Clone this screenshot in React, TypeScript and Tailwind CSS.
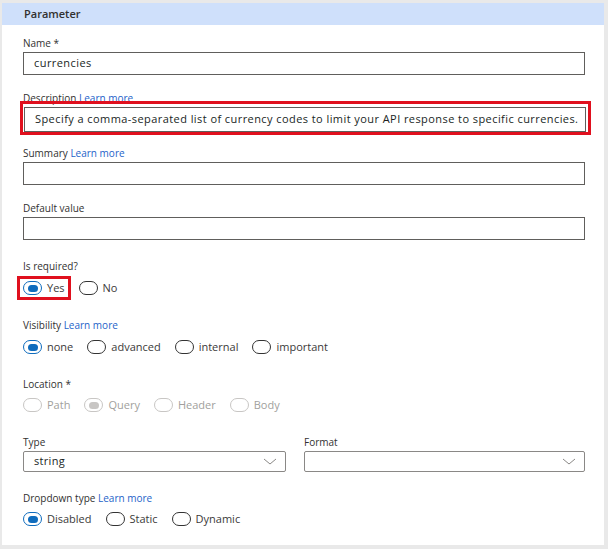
import type { ReactNode } from 'react';

function Label({ children, className = '' }: { children: ReactNode; className?: string }) {
  return <div className={`h-[14px] leading-[14px] text-[10px] text-[#323130] ${className}`}>{children}</div>;
}

function LearnMore() {
  return <span className="text-[#2563c9]"> Learn more</span>;
}

function Radio({
  label,
  checked = false,
  disabled = false,
}: {
  label: string;
  checked?: boolean;
  disabled?: boolean;
}) {
  const ring = disabled ? 'border-[#c8c6c4]' : checked ? 'border-[#0f6cbd]' : 'border-[#333333]';
  const dot = disabled ? 'bg-[#c8c6c4]' : 'bg-[#0f6cbd]';
  return (
    <div className="flex items-center gap-[5px]">
      <span className={`w-[19px] h-[14px] rounded-full border ${ring} flex items-center justify-center bg-white`}>
        {checked && <span className={`w-[10px] h-[7px] rounded-full ${dot}`} />}
      </span>
      <span className={`text-[11px] ${disabled ? 'text-[#a19f9d]' : 'text-[#3b3a39]'}`}>{label}</span>
    </div>
  );
}

function TextBox({ value = '', className = '' }: { value?: string; className?: string }) {
  return (
    <div
      className={`h-[23px] border border-[#605e5c] bg-white flex items-center px-[10px] text-[11px] tracking-[0.43px] text-[#201f1e] whitespace-nowrap overflow-hidden ${className}`}
    >
      {value}
    </div>
  );
}

function Select({ value = '' }: { value?: string }) {
  return (
    <div className="h-[21px] border border-[#8a8886] rounded-[2px] bg-white flex items-center justify-between pl-[10px] pr-[8px] text-[11px] tracking-[0.3px] text-[#201f1e]">
      <span>{value}</span>
      <svg width="14" height="7" viewBox="0 0 14 7" fill="none">
        <path d="M1 1l6 5 6-5" stroke="#8a8886" strokeWidth="1" />
      </svg>
    </div>
  );
}

export default function App() {
  return (
    <div
      className="w-[608px] h-[549px] bg-[#e9e9e9] pt-[3px] pl-[2px] pr-[4px] pb-[4px]"
      style={{ fontFamily: '"Open Sans", "Noto Sans", sans-serif' }}
    >
      <div className="h-full bg-white flex flex-col">
        {/* Header */}
        <div className="h-[22px] bg-[#cfe0fb] pl-[22px] flex items-center text-[11px] font-semibold text-[#323130]">
          Parameter
        </div>

        <div className="pl-[21px] pr-[19px] flex flex-col">
          <Label className="mt-[11px]">Name *</Label>
          <TextBox className="mt-[2px]" value="currencies" />

          <Label className="mt-[16px]">
            Description
            <LearnMore />
          </Label>
          <div className="relative mt-[2px] ml-[1px] mr-[-1px]">
            <TextBox className="h-[25px]" value="Specify a comma-separated list of currency codes to limit your API response to specific currencies." />
            <div className="absolute -left-[4px] -right-[5px] -top-[6px] -bottom-[3px] border-[3px] border-[#e0101e] pointer-events-none" />
          </div>

          <Label className="mt-[14px]">
            Summary
            <LearnMore />
          </Label>
          <TextBox className="mt-[2px]" />

          <Label className="mt-[16px]">Default value</Label>
          <TextBox className="mt-[2px]" />

          <Label className="mt-[19px]">Is required?</Label>
          <div className="mt-[5px] h-[20px] flex items-center gap-[14px]">
            <div className="relative">
              <Radio label="Yes" checked />
              <div className="absolute -left-[6px] -right-[6px] -top-[4px] -bottom-[4px] border-[3px] border-[#e0101e]" />
            </div>
            <Radio label="No" />
          </div>

          <Label className="mt-[20px]">
            Visibility
            <LearnMore />
          </Label>
          <div className="mt-[5px] h-[20px] flex items-center gap-[14px]">
            <Radio label="none" checked />
            <Radio label="advanced" />
            <Radio label="internal" />
            <Radio label="important" />
          </div>

          <Label className="mt-[20px]">Location *</Label>
          <div className="mt-[4px] h-[20px] flex items-center gap-[14px]">
            <Radio label="Path" disabled />
            <Radio label="Query" checked disabled />
            <Radio label="Header" disabled />
            <Radio label="Body" disabled />
          </div>

          <div className="mt-[20px] flex gap-[18px]">
            <div className="w-[263px] flex flex-col">
              <Label>Type</Label>
              <div className="mt-[2px]">
                <Select value="string" />
              </div>
            </div>
            <div className="flex-1 flex flex-col">
              <Label>Format</Label>
              <div className="mt-[2px]">
                <Select />
              </div>
            </div>
          </div>

          <Label className="mt-[19px]">
            Dropdown type
            <LearnMore />
          </Label>
          <div className="mt-[4px] h-[20px] flex items-center gap-[14px]">
            <Radio label="Disabled" checked />
            <Radio label="Static" />
            <Radio label="Dynamic" />
          </div>
        </div>
      </div>
    </div>
  );
}
